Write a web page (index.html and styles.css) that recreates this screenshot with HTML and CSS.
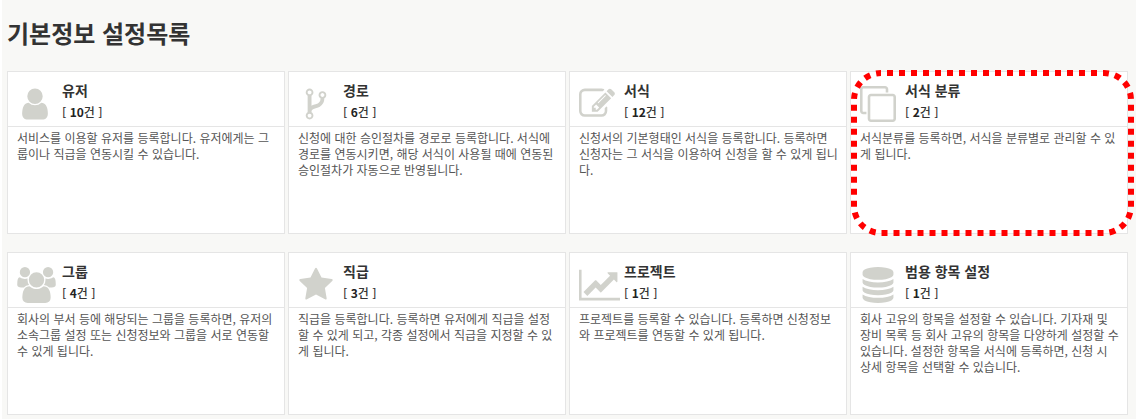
FILE: index.html
```html
<!DOCTYPE html>
<html lang="ko">
<head>
  <meta charset="UTF-8">
  <title>기본정보 설정목록</title>
  <link rel="stylesheet" href="styles.css">
</head>
<body>

  <main class="page">
    <h1>기본정보 설정목록</h1>

    <div class="cards">
      <section class="card">
        <div class="card-head">
          <svg class="icon" viewBox="0 0 1792 1792"><path d="M1536 1399q0 109-62.5 187t-150.5 78h-854q-88 0-150.5-78t-62.5-187q0-85 8.5-160.5t31.5-152 58.5-131 94-89 134.5-34.5q131 128 313 128t313-128q76 0 134.5 34.5t94 89 58.5 131 31.5 152 8.5 160.5zm-256-887q0 159-112.5 271.5t-271.5 112.5-271.5-112.5-112.5-271.5 112.5-271.5 271.5-112.5 271.5 112.5 112.5 271.5z"/></svg>
          <div class="card-title">
            <h2><a href="#user">유저</a></h2>
            <p class="count">[ <b>10</b>건 ]</p>
          </div>
        </div>
        <p class="card-text">서비스를 이용할 유저를 등록합니다. 유저에게는 그룹이나 직급을 연동시킬 수 있습니다.</p>
      </section>

      <section class="card">
        <div class="card-head">
          <svg class="icon" viewBox="0 0 1792 1792"><path d="M672 1472q0-40-28-68t-68-28-68 28-28 68 28 68 68 28 68-28 28-68zm0-1152q0-40-28-68t-68-28-68 28-28 68 28 68 68 28 68-28 28-68zm640 128q0-40-28-68t-68-28-68 28-28 68 28 68 68 28 68-28 28-68zm96 0q0 52-26 96.5t-70 69.5q-2 287-226 414-67 38-203 81-128 40-169.5 71t-41.5 100v26q44 25 70 69.5t26 96.5q0 80-56 136t-136 56-136-56-56-136q0-52 26-96.5t70-69.5v-820q-44-25-70-69.5t-26-96.5q0-80 56-136t136-56 136 56 56 136q0 52-26 96.5t-70 69.5v497q54-26 154-57 55-17 87.5-29.5t70.5-31 59-39.5 40.5-51 28-69.5 8.5-91.5q-44-25-70-69.5t-26-96.5q0-80 56-136t136-56 136 56 56 136z"/></svg>
          <div class="card-title">
            <h2><a href="#route">경로</a></h2>
            <p class="count">[ <b>6</b>건 ]</p>
          </div>
        </div>
        <p class="card-text">신청에 대한 승인절차를 경로로 등록합니다. 서식에 경로를 연동시키면, 해당 서식이 사용될 때에 연동된 승인절차가 자동으로 반영됩니다.</p>
      </section>

      <section class="card">
        <div class="card-head">
          <svg class="icon" viewBox="0 0 1792 1792"><path d="M888 1184l116-116-152-152-116 116v56h96v96h56zm440-720q-16-16-33 1l-350 350q-17 17-1 33t33-1l350-350q17-17 1-33zm80 594v190q0 119-84.5 203.5t-203.5 84.5h-832q-119 0-203.5-84.5t-84.5-203.5v-832q0-119 84.5-203.5t203.5-84.5h832q63 0 117 25 15 7 18 23 3 17-9 29l-49 49q-14 14-32 8-23-6-45-6h-832q-66 0-113 47t-47 113v832q0 66 47 113t113 47h832q66 0 113-47t47-113v-126q0-13 9-22l64-64q15-15 35-7t20 29zm-96-738l288 288-672 672h-288v-288zm444 132l-92 92-288-288 92-92q28-28 68-28t68 28l152 152q28 28 28 68t-28 68z"/></svg>
          <div class="card-title">
            <h2><a href="#form">서식</a></h2>
            <p class="count">[ <b>12</b>건 ]</p>
          </div>
        </div>
        <p class="card-text">신청서의 기본형태인 서식을 등록합니다. 등록하면 신청자는 그 서식을 이용하여 신청을 할 수 있게 됩니다.</p>
      </section>

      <section class="card">
        <div class="card-head">
          <svg class="icon" viewBox="0 0 1792 1792"><path d="M1664 1632v-1088q0-13-9.5-22.5t-22.5-9.5h-1088q-13 0-22.5 9.5t-9.5 22.5v1088q0 13 9.5 22.5t22.5 9.5h1088q13 0 22.5-9.5t9.5-22.5zm128-1088v1088q0 66-47 113t-113 47h-1088q-66 0-113-47t-47-113v-1088q0-66 47-113t113-47h1088q66 0 113 47t47 113zm-384-384v160h-128v-160q0-13-9.5-22.5t-22.5-9.5h-1088q-13 0-22.5 9.5t-9.5 22.5v1088q0 13 9.5 22.5t22.5 9.5h160v128h-160q-66 0-113-47t-47-113v-1088q0-66 47-113t113-47h1088q66 0 113 47t47 113z"/></svg>
          <div class="card-title">
            <h2><a href="#form-category">서식 분류</a></h2>
            <p class="count">[ <b>2</b>건 ]</p>
          </div>
        </div>
        <p class="card-text">서식분류를 등록하면, 서식을 분류별로 관리할 수 있게 됩니다.</p>
        <!-- red dotted marker -->
        <svg class="marker" viewBox="0 0 283 166"><rect x="3" y="3" width="277" height="160" rx="27"/></svg>
      </section>

      <section class="card">
        <div class="card-head">
          <svg class="icon icon-group" viewBox="-64 0 1920 1792"><path d="M529 896q-162 5-265 128h-134q-82 0-138-40.5t-56-118.5q0-353 124-353 6 0 43.5 21t97.5 42.5 119 21.5q67 0 133-23-5 37-5 66 0 159 81 256zm1071 637q0 120-73 189.5t-194 69.5h-874q-121 0-194-69.5t-73-189.5q0-53 3.5-103.5t14-109 26.5-108.5 43-97.5 62-81 85.5-53.5 111.5-20q10 0 43 21.5t73 48 107 48 135 21.5 135-21.5 107-48 73-48 43-21.5q61 0 111.5 20t85.5 53.5 62 81 43 97.5 26.5 108.5 14 109 3.5 103.5zm-1024-1277q0 106-75 181t-181 75-181-75-75-181 75-181 181-75 181 75 75 181zm704 384q0 159-112.5 271.5t-271.5 112.5-271.5-112.5-112.5-271.5 112.5-271.5 271.5-112.5 271.5 112.5 112.5 271.5zm576 225q0 78-56 118.5t-138 40.5h-134q-103-123-265-128 81-97 81-256 0-29-5-66 66 23 133 23 59 0 119-21.5t97.5-42.5 43.5-21q124 0 124 353zm-128-609q0 106-75 181t-181 75-181-75-75-181 75-181 181-75 181 75 75 181z"/></svg>
          <div class="card-title">
            <h2><a href="#group">그룹</a></h2>
            <p class="count">[ <b>4</b>건 ]</p>
          </div>
        </div>
        <p class="card-text">회사의 부서 등에 해당되는 그룹을 등록하면, 유저의 소속그룹 설정 또는 신청정보와 그룹을 서로 연동할 수 있게 됩니다.</p>
      </section>

      <section class="card">
        <div class="card-head">
          <svg class="icon" viewBox="0 0 1792 1792"><path d="M1728 647q0 22-26 48l-363 354 86 500q1 7 1 20 0 21-10.5 35.5t-30.5 14.5q-19 0-40-12l-449-236-449 236q-22 12-40 12-21 0-31.5-14.5t-10.5-35.5q0-6 2-20l86-500-364-354q-25-27-25-48 0-37 56-46l502-73 225-455q19-41 49-41t49 41l225 455 502 73q56 9 56 46z"/></svg>
          <div class="card-title">
            <h2><a href="#position">직급</a></h2>
            <p class="count">[ <b>3</b>건 ]</p>
          </div>
        </div>
        <p class="card-text">직급을 등록합니다. 등록하면 유저에게 직급을 설정할 수 있게 되고, 각종 설정에서 직급을 지정할 수 있게 됩니다.</p>
      </section>

      <section class="card">
        <div class="card-head">
          <svg class="icon icon-chart" viewBox="0 0 2048 1792"><path d="M2048 1536v128h-2048v-1536h128v1408h1920zm-128-1248v435q0 21-19.5 29.5t-35.5-7.5l-121-121-633 633q-10 10-23 10t-23-10l-233-233-416 416-192-192 585-585q10-10 23-10t23 10l233 233 464-464-121-121q-16-16-7.5-35.5t29.5-19.5h435q14 0 23 9t9 23z"/></svg>
          <div class="card-title">
            <h2><a href="#project">프로젝트</a></h2>
            <p class="count">[ <b>1</b>건 ]</p>
          </div>
        </div>
        <p class="card-text">프로젝트를 등록할 수 있습니다. 등록하면 신청정보와 프로젝트를 연동할 수 있게 됩니다.</p>
      </section>

      <section class="card">
        <div class="card-head">
          <svg class="icon" viewBox="0 0 1792 1792"><path d="M896 768q237 0 443-43t325-127v170q0 69-103 128t-280 93.5-385 34.5-385-34.5-280-93.5-103-128v-170q119 84 325 127t443 43zm0 768q237 0 443-43t325-127v170q0 69-103 128t-280 93.5-385 34.5-385-34.5-280-93.5-103-128v-170q119 84 325 127t443 43zm0-384q237 0 443-43t325-127v170q0 69-103 128t-280 93.5-385 34.5-385-34.5-280-93.5-103-128v-170q119 84 325 127t443 43zm0-1152q208 0 385 34.5t280 93.5 103 128v128q0 69-103 128t-280 93.5-385 34.5-385-34.5-280-93.5-103-128v-128q0-69 103-128t280-93.5 385-34.5z"/></svg>
          <div class="card-title">
            <h2><a href="#item">범용 항목 설정</a></h2>
            <p class="count">[ <b>1</b>건 ]</p>
          </div>
        </div>
        <p class="card-text">회사 고유의 항목을 설정할 수 있습니다. 기자재 및 장비 목록 등 회사 고유의 항목을 다양하게 설정할 수 있습니다. 설정한 항목을 서식에 등록하면, 신청 시 상세 항목을 선택할 수 있습니다.</p>
      </section>
    </div>
  </main>

</body>
</html>
```
FILE: styles.css
```css
* {
  box-sizing: border-box;
}

body {
  margin: 0 5px 0 2px;
  font-family: "Noto Sans CJK KR", sans-serif;
  font-size: 12px;
  line-height: 16px;
  color: #555;
  background: #fff;
}

h1, h2, p {
  margin: 0;
}

.page {
  min-height: 100vh;
  padding: 15px 8px 3px 5px;
  background: #f8f8f6;
}

h1 {
  font-size: 24px;
  line-height: 35px;
  font-weight: 700;
  color: #333;
}

.cards {
  display: grid;
  grid-template-columns: repeat(4, 1fr);
  gap: 18px 3px;
  margin-top: 21px;
}

.card {
  position: relative;
  min-height: 163px;
  background: #fff;
  border: 1px solid #e5e5e5;
}

.card-head {
  display: flex;
  padding: 8px 0 4px 9px;
  border-bottom: 1px solid #e5e5e5;
}

.icon {
  width: 36px;
  height: 36px;
  margin-top: 6px;
  fill: #d1d2cc;
}

.icon-group {
  width: 39px;
}

.icon-chart {
  width: 41px;
}

.card-title {
  flex: 1;
  /* title column starts at the same place for every icon width */
  margin-left: 9px;
  color: #333;
}

.icon-group + .card-title {
  margin-left: 6px;
}

.icon-chart + .card-title {
  margin-left: 4px;
}

h2 {
  font-size: 14px;
  line-height: 20px;
  font-weight: 700;
}

h2 a {
  color: #333;
  text-decoration: none;
}

.count {
  margin-top: 2px;
  line-height: 20px;
  font-weight: 500;
}

.count b {
  color: #222;
}

.card-text {
  padding: 3px 7px 3px 9px;
}

.marker {
  position: absolute;
  top: -2px;
  left: 0;
  width: calc(100% + 7px);
  height: calc(100% + 5px);
}

.marker rect {
  fill: none;
  stroke: #f00;
  stroke-width: 6;
  stroke-dasharray: 6;
  stroke-dashoffset: 6;
}
```
